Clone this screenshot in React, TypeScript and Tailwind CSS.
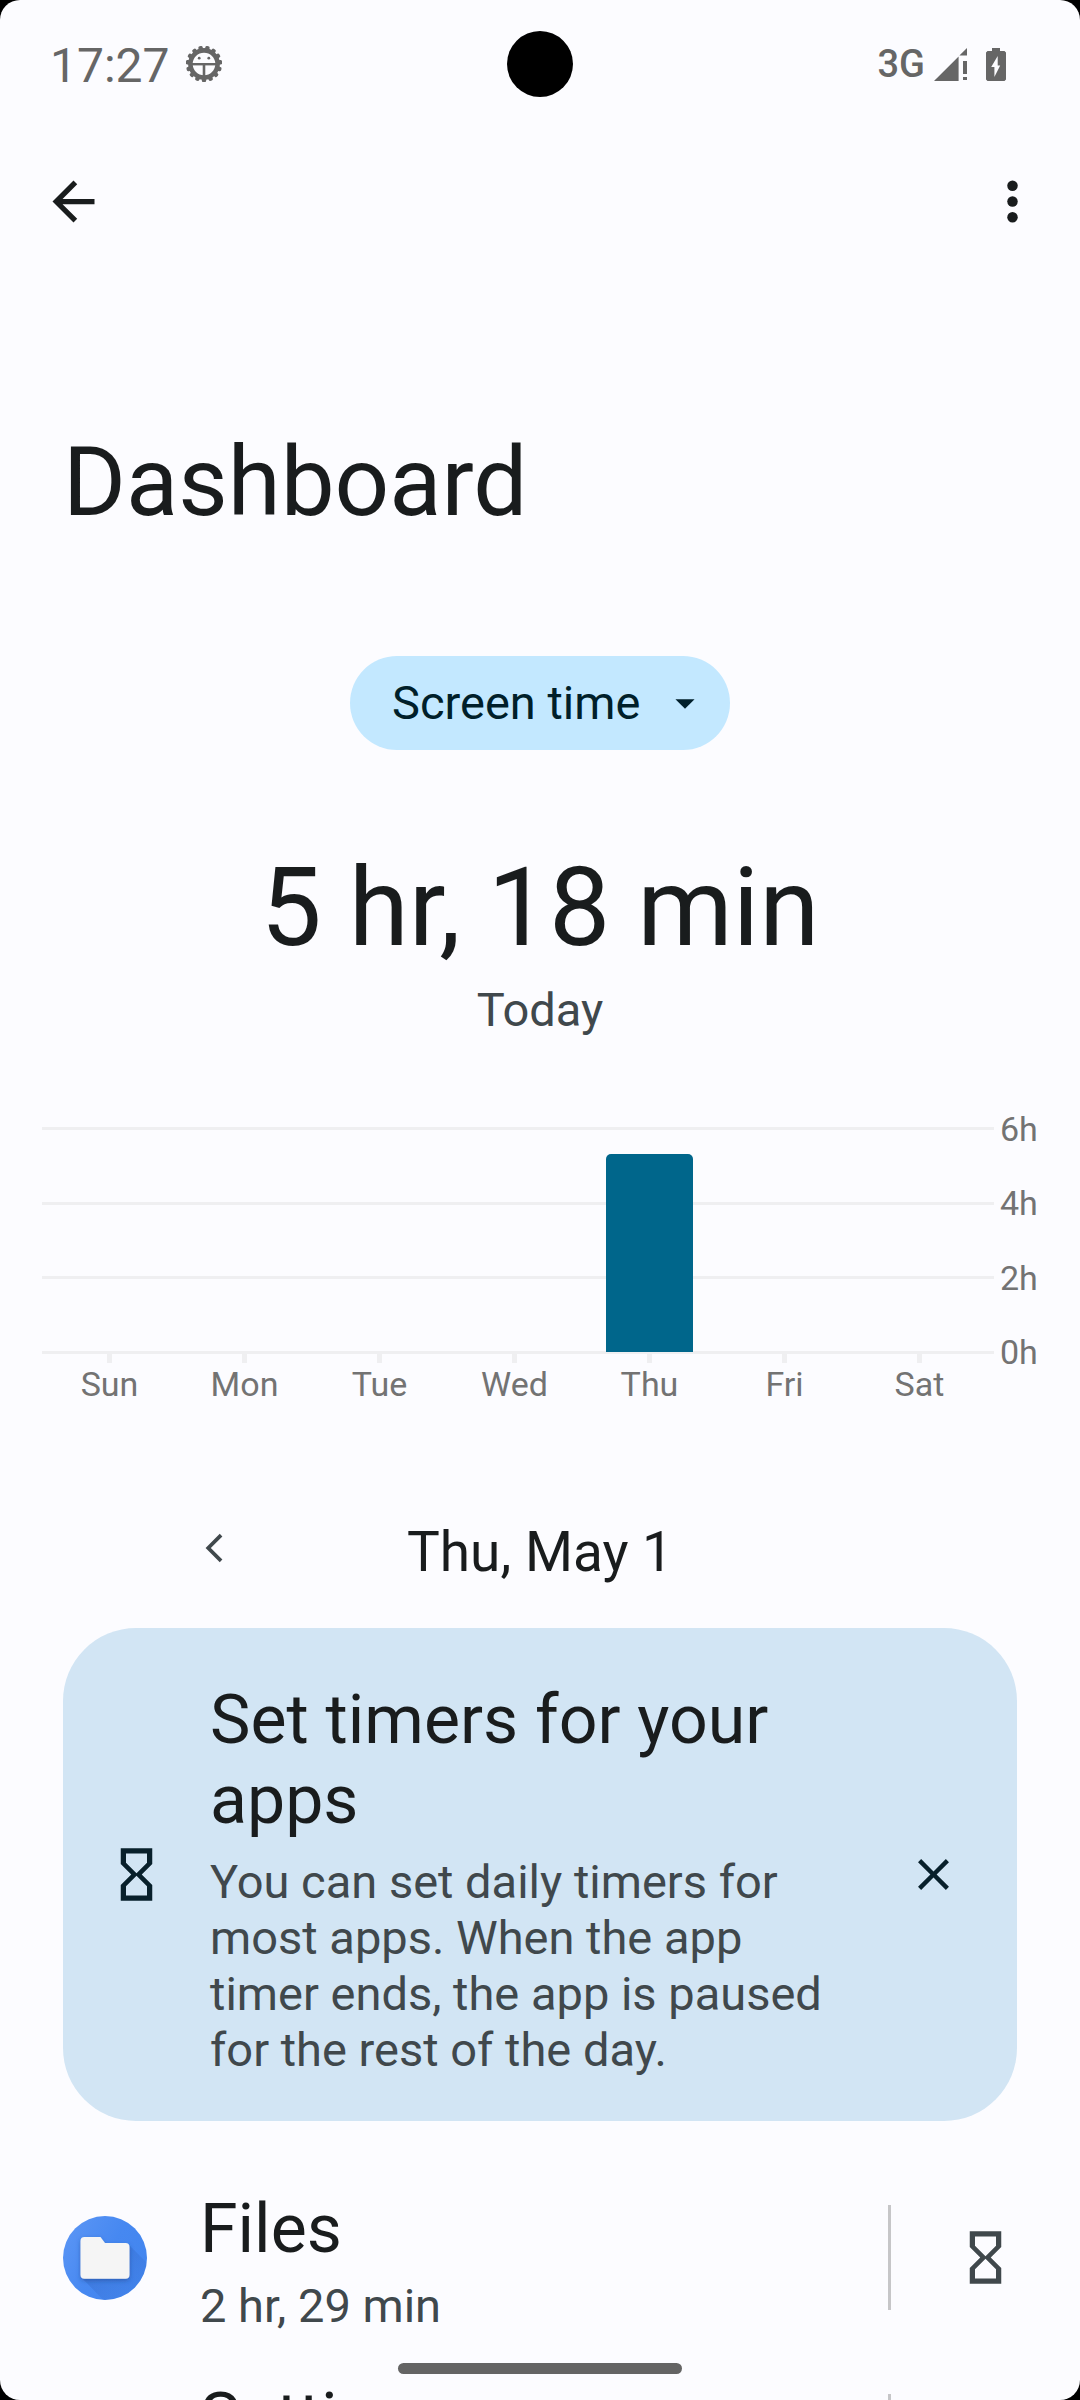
import React from "react";

const days = [
  { name: "Sun", hours: 0 },
  { name: "Mon", hours: 0 },
  { name: "Tue", hours: 0 },
  { name: "Wed", hours: 0 },
  { name: "Thu", hours: 5.3 },
  { name: "Fri", hours: 0 },
  { name: "Sat", hours: 0 },
];
const hourMarks = [6, 4, 2, 0];
const maxHours = 6;

function DebugIcon() {
  const teeth = Array.from({ length: 15 }, (_, i) => 180 + i * 24);
  return (
    <svg viewBox="-18 -18 36 36" className="size-9" aria-hidden="true">
      <g fill="#666666">
        {teeth.map((angle) => (
          <rect key={angle} x="-2.2" y="-18.2" width="4.4" height="6" rx="1.6" transform={`rotate(${angle})`} />
        ))}
      </g>
      <circle r="13.6" fill="none" stroke="#666666" strokeWidth="4.6" />
      <rect x="-13" y="-1" width="26" height="2.4" fill="#666666" />
      <rect x="-1.3" y="0" width="2.6" height="14" fill="#666666" />
      <circle cx="-4.8" cy="-5.8" r="1.4" fill="#666666" />
      <circle cx="4.8" cy="-5.8" r="1.4" fill="#666666" />
    </svg>
  );
}

function SignalIcon() {
  return (
    <svg viewBox="0 0 33 33" className="size-[33px]" fill="#666666" aria-hidden="true">
      <path d="M0 33 24.6 8.4V33ZM25.4 7.6 33 0v7.6ZM29 13h4v13h-4ZM29 29h4v3h-4Z" />
    </svg>
  );
}

function BatteryIcon() {
  return (
    <svg viewBox="0 0 20 33" className="h-[33px] w-5" aria-hidden="true">
      <path d="M6 0h8v3h4.5L20 4.5v27L18.5 33h-17L0 31.5v-27L1.5 3H6Z" fill="#666666" />
      <path d="M11.7 8 5.2 19h3.2v10l5.8-11.5h-2.5Z" fill="#fcfcff" />
    </svg>
  );
}

function Hourglass({ className }: { className: string }) {
  return (
    <svg viewBox="0 0 24 24" className={`size-[63px] shrink-0 ${className}`} fill="currentColor" aria-hidden="true">
      <path d="M6 2v6l4 4-4 4v6h12v-6l-4-4 4-4V2H6zm10 14.5V20H8v-3.5l4-4 4 4zm-4-5l-4-4V4h8v3.5l-4 4z" />
    </svg>
  );
}

function FilesIcon() {
  return (
    <svg viewBox="0 0 84 84" className="size-[84px]" aria-hidden="true">
      <defs>
        <linearGradient id="disc" x1="0" y1="0.2" x2="1" y2="0.8">
          <stop offset="0" stopColor="#5a95f5" />
          <stop offset="0.5" stopColor="#4688f1" />
          <stop offset="1" stopColor="#4285ee" />
        </linearGradient>
        <linearGradient id="cast" x1="0.3" y1="0.3" x2="0.9" y2="0.9">
          <stop offset="0" stopColor="#2a56b0" stopOpacity="0.3" />
          <stop offset="1" stopColor="#3c78dc" stopOpacity="0.1" />
        </linearGradient>
        <clipPath id="round">
          <circle cx="42" cy="42" r="42" />
        </clipPath>
        <filter id="soft" x="-20%" y="-20%" width="140%" height="150%">
          <feDropShadow dx="0" dy="2" stdDeviation="2" floodColor="#1a3f8c" floodOpacity="0.5" />
        </filter>
      </defs>
      <circle cx="42" cy="42" r="42" fill="url(#disc)" />
      <g clipPath="url(#round)">
        <path d="M65 28 90 53V90H46L19 62Z" fill="url(#cast)" />
      </g>
      <path
        d="M21.5 21H37.5L42 27H62.5a4 4 0 0 1 4 4V58.7a4 4 0 0 1-4 4H21.5a4 4 0 0 1-4-4V25a4 4 0 0 1 4-4Z"
        fill="#f5f5f5"
        filter="url(#soft)"
      />
    </svg>
  );
}

function StatusBar() {
  return (
    <div className="grid h-32 shrink-0 grid-cols-[1fr_auto_1fr] items-center pr-[74px] pl-[50px] text-[#666666]">
      <div className="flex items-center gap-4">
        <span className="pt-1 text-[48px] leading-[56px]">17:27</span>
        <DebugIcon />
      </div>
      <div className="ml-6 size-[66px] rounded-full bg-black" />
      <div className="flex items-center justify-end">
        <span className="mr-[9px] text-[38px] leading-[44px] font-medium">3G</span>
        <SignalIcon />
        <span className="ml-[19px]">
          <BatteryIcon />
        </span>
      </div>
    </div>
  );
}

function Toolbar() {
  return (
    <header className="flex h-[147px] items-center justify-between pr-9 pl-[42px] text-[#191c1d]">
      <button type="button" aria-label="Back">
        <svg viewBox="0 0 24 24" className="size-[63px]" fill="currentColor" aria-hidden="true">
          <path d="M20 11H7.83l5.59-5.59L12 4l-8 8 8 8 1.41-1.41L7.83 13H20v-2z" />
        </svg>
      </button>
      <button type="button" aria-label="More options">
        <svg viewBox="0 0 24 24" className="size-[63px]" fill="currentColor" aria-hidden="true">
          <circle cx="12" cy="6" r="2" />
          <circle cx="12" cy="12" r="2" />
          <circle cx="12" cy="18" r="2" />
        </svg>
      </button>
    </header>
  );
}

function UsageChart() {
  return (
    <section aria-label="Screen time by day" className="mt-[89px] px-[42px] text-[34px] leading-10 text-[#737373]">
      <div className="flex gap-1.5">
        <div className="grid h-[227px] flex-1">
          <div className="col-start-1 row-start-1 flex flex-col justify-between">
            {hourMarks.map((h) => (
              <div key={h} className="h-[3px] bg-[#efeff1]" />
            ))}
          </div>
          <div className="col-start-1 row-start-1 mt-px mr-[7px] mb-0.5 grid grid-cols-7 items-end justify-items-center">
            {days.map((d) => (
              <div
                key={d.name}
                className="w-[87px] rounded-t-[5px] bg-[#00668b]"
                style={{ height: `${(d.hours / maxHours) * 100}%` }}
              />
            ))}
          </div>
        </div>
        <div className="flex h-[227px] w-[38px] flex-col justify-between">
          {hourMarks.map((h) => (
            <div key={h} className="flex h-[3px] items-center">
              {h}h
            </div>
          ))}
        </div>
      </div>
      <div className="mr-[51px] grid grid-cols-7">
        {days.map((d) => (
          <div key={d.name} className="flex flex-col items-center gap-px">
            <div className="h-[9px] w-[5px] bg-[#efeff1]" />
            {d.name}
          </div>
        ))}
      </div>
    </section>
  );
}

function TimerCard() {
  return (
    <section className="mx-[63px] mt-11 flex items-center rounded-[73px] bg-[#d2e5f4] pr-[21px] pl-[42px]">
      <Hourglass className="text-[#08202b]" />
      <div className="ml-[42px] flex-1 pt-[52px] pb-[43px]">
        <h2 className="text-[68px] leading-[80px] text-[#191c1d]">Set timers for your apps</h2>
        <p className="mt-3.5 text-[47px] leading-[56px] text-[#40484c]">
          You can set daily timers for most apps. When the app timer ends, the app is paused for the rest of the day.
        </p>
      </div>
      <button type="button" aria-label="Dismiss" className="ml-5 flex size-[126px] items-center justify-center text-[#08202b]">
        <svg viewBox="0 0 24 24" className="size-[53px]" fill="currentColor" aria-hidden="true">
          <path d="M19 6.41 17.59 5 12 10.59 6.41 5 5 6.41 10.59 12 5 17.59 6.41 19 12 13.41 17.59 19 19 17.59 13.41 12z" />
        </svg>
      </button>
    </section>
  );
}

function AppRow({ name, time, icon }: { name: string; time?: string; icon?: React.ReactNode }) {
  return (
    <li className="flex h-[189px] items-center px-[63px]">
      <div className="size-[84px]">{icon}</div>
      <div className="ml-[53px] flex-1 self-start pt-[26px]">
        <h3 className="text-[68px] leading-[80px] text-[#191c1d]">{name}</h3>
        {time && <p className="mt-[9px] text-[47px] leading-[56px] text-[#40484c]">{time}</p>}
      </div>
      <div className="h-[105px] w-[3px] bg-[#c6c6c8]" />
      <button type="button" aria-label={`Set timer for ${name}`} className="ml-[63px]">
        <Hourglass className="text-[#40484c]" />
      </button>
    </li>
  );
}

export default function App() {
  return (
    <div className="h-screen bg-black font-[Roboto,sans-serif]">
      <div className="relative flex h-full flex-col overflow-hidden rounded-[20px] bg-[#fcfcff]">
        <StatusBar />
        <main className="min-h-0 flex-1 overflow-y-auto [scrollbar-width:none]">
          <Toolbar />
          <h1 className="mt-[151px] px-[63px] text-[96px] leading-[112px] text-[#191c1d]">Dashboard</h1>

          <div className="mt-[118px] flex justify-center">
            <div className="relative">
              <select
                aria-label="Usage type"
                className="block h-[94px] appearance-none rounded-full bg-[#c3e8ff] pr-[89px] pl-[42px] text-[47px] leading-[56px] text-[#001f2a]"
              >
                <option>Screen time</option>
              </select>
              <svg
                viewBox="0 0 24 24"
                className="pointer-events-none absolute top-6 right-[22px] size-[46px]"
                fill="#001f2a"
                aria-hidden="true"
              >
                <path d="m7 10 5 5 5-5z" />
              </svg>
            </div>
          </div>

          <p className="mt-[94px] text-center text-[109px] leading-[128px] text-[#191c1d]">5 hr, 18 min</p>
          <p className="mt-2.5 text-center text-[47px] leading-[56px] text-[#40484c]">Today</p>

          <UsageChart />

          <div className="mt-[116px] grid grid-cols-[56px_1fr_56px] items-start px-[187px]">
            <button type="button" aria-label="Previous day" className="text-[#40484c]">
              <svg
                viewBox="0 0 24 24"
                className="size-14"
                fill="none"
                stroke="currentColor"
                strokeWidth="1.6"
                aria-hidden="true"
              >
                <path d="M14.6 6.5 9.1 12l5.5 5.5" />
              </svg>
            </button>
            <p className="text-center text-[55px] leading-[64px] text-[#191c1d]">Thu, May 1</p>
          </div>

          <TimerCard />

          <ul className="mt-[42px]">
            <AppRow name="Files" time="2 hr, 29 min" icon={<FilesIcon />} />
            <AppRow name="Settings" />
          </ul>
        </main>
        <div className="absolute bottom-[26px] left-1/2 h-[11px] w-[284px] -translate-x-1/2 rounded-full bg-[#646464]" />
      </div>
    </div>
  );
}
